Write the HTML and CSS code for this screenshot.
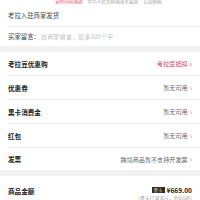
FILE: index.html
```html
<!DOCTYPE html>
<html lang="zh">
<head>
<meta charset="utf-8">
<link rel="stylesheet" href="styles.css">
</head>
<body>
<div class="page">
  <section class="card top">
    <div class="tags">
      <span class="tag-red">支持闪电退款</span>
      <span class="tag-gray">中华人民共和国海关监管</span>
      <span class="tag-gray">正品保障</span>
    </div>
    <div class="row plain"><span class="label-light">考拉入驻商家发货</span></div>
    <div class="row plain msg"><span class="label-light">买家留言：</span><span class="ph">给商家留言，最多100个字</span></div>
  </section>
  <div class="band"></div>
  <section class="card">
    <div class="row"><span class="label">考拉豆优惠购</span><span class="val red">考拉豆抵扣<i class="chev">›</i></span></div>
    <div class="row"><span class="label">优惠券</span><span class="val">暂无可用<i class="chev">›</i></span></div>
    <div class="row"><span class="label">黑卡消费金</span><span class="val">暂无可用<i class="chev">›</i></span></div>
    <div class="row"><span class="label">红包</span><span class="val">暂无可用<i class="chev">›</i></span></div>
    <div class="row last"><span class="label">发票</span><span class="val">跨境商品暂不支持开发票<i class="chev">›</i></span></div>
  </section>
  <div class="band band2"></div>
  <section class="card">
    <div class="row amount">
      <span class="label">商品金额</span>
      <div class="price-box">
        <div class="price"><span class="badge">黑卡</span><span class="num">¥669.00</span></div>
        <div class="sub">(黑卡已减30元，约9.6折)</div>
      </div>
    </div>
  </section>
</div>
</body>
</html>
```
FILE: styles.css
```css
html, body {
  margin: 0;
  padding: 0;
  background: #ffffff;
}
body {
  font-family: "Noto Sans CJK SC", "Noto Sans", sans-serif;
  color: #333333;
  width: 200px;
  overflow: hidden;
}
.page {
  margin-top: -3px;
}
.card {
  background: #ffffff;
}
.tags {
  height: 8px;
  display: flex;
  align-items: center;
  padding-left: 55px;
  gap: 5px;
  font-size: 4.6px;
  line-height: 8px;
}
.tag-red { color: #e84a5f; }
.tag-gray { color: #9a9a9a; }
.row {
  height: 24px;
  margin-left: 8px;
  padding-right: 8px;
  display: flex;
  align-items: center;
  justify-content: space-between;
  border-bottom: 0.5px solid #eeeeee;
  box-sizing: border-box;
}
.row.plain {
  justify-content: flex-start;
  height: 22px;
}
.row.msg {
  border-bottom: none;
  height: 19px;
}
.row.last { border-bottom: none; height: 22px; }
.label-light {
  font-size: 6.4px;
  color: #444444;
}
.ph {
  font-size: 6.2px;
  color: #c2c2c2;
  margin-left: 1px;
}
.label {
  font-size: 6.6px;
  font-weight: 700;
  color: #222222;
}
.val {
  font-size: 6.1px;
  color: #666666;
  display: flex;
  align-items: center;
}
.val.red { color: #d23a5c; }
.chev {
  font-style: normal;
  font-size: 8px;
  line-height: 6px;
  margin-left: 2px;
  color: #999999;
}
.val.red .chev { color: #d23a5c; }
.band {
  height: 6px;
  background: #f2f2f2;
}
.row.amount {
  height: 30px;
  align-items: flex-start;
  padding-top: 10px;
  border-bottom: none;
}
.price-box {
  display: flex;
  flex-direction: column;
  align-items: flex-end;
}
.price {
  display: flex;
  align-items: center;
  gap: 2px;
}
.badge {
  background: #2b2b2b;
  color: #e8d3a8;
  font-size: 4.5px;
  padding: 0 2px;
  line-height: 6px;
  height: 6px;
}
.num {
  font-size: 6.6px;
  font-weight: 700;
  color: #222222;
  line-height: 8px;
}
.sub {
  font-size: 4.8px;
  color: #999999;
  line-height: 8px;
}
```
